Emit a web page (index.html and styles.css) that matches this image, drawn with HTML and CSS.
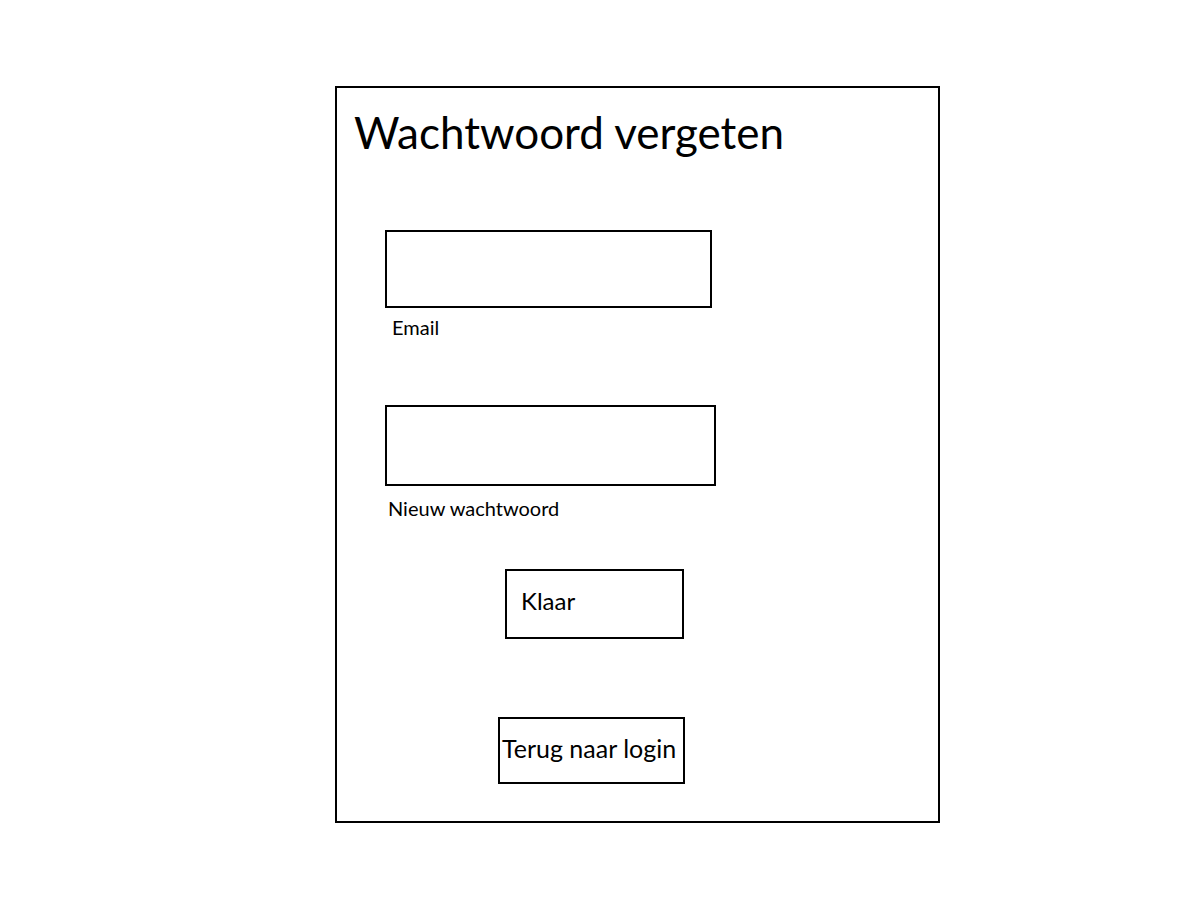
FILE: index.html
```html
<!DOCTYPE html>
<html lang="nl">
<head>
    <meta charset="UTF-8">
    <title>Wachtwoord vergeten</title>
    <meta name="viewport" content="width=device-width, initial-scale=1">
    <link rel="stylesheet" href="styles.css">
</head>
<body>
<div class="card">
    <h1>Wachtwoord vergeten</h1>
    <form id="resetForm" autocomplete="off">
        <div class="field field-email">
            <input type="email" id="email">
            <label for="email">Email</label>
        </div>
        <div class="field field-password">
            <input type="password" id="newPassword">
            <label for="newPassword">Nieuw wachtwoord</label>
        </div>
        <button type="submit" class="btn-done">Klaar</button>
        <button type="button" class="btn-back">Terug naar login</button>
    </form>
</div>
</body>
</html>
```

FILE: styles.css
```css
body {
  background: #fff;
  font-family: Lato, 'Liberation Sans', sans-serif;
  color: #000;
  margin: 0;
}
.card {
  box-sizing: border-box;
  width: 605px;
  height: 737px;
  margin: 86px 0 0 335px;
  border: 2px solid #000;
  padding: 22px 17px 0;
}
h1 {
  margin: 0;
  font-size: 44px;
  font-weight: 400;
  line-height: 1;
}
form {
  display: flex;
  flex-direction: column;
  align-items: flex-start;
}
.field {
  display: flex;
  flex-direction: column;
  align-items: flex-start;
  margin-left: 31px;
}
.field input {
  box-sizing: border-box;
  border: 2px solid #000;
  border-radius: 0;
  background: #fff;
  outline: none;
  margin: 0;
  padding: 0 10px;
  font-size: 20px;
  font-family: inherit;
}
.field label {
  font-size: 20px;
  line-height: 1;
}
.field-email {
  margin-top: 76px;
}
.field-email input {
  width: 327px;
  height: 78px;
}
.field-email label {
  margin: 9px 0 0 7px;
}
.field-password {
  margin-top: 68px;
}
.field-password input {
  width: 331px;
  height: 81px;
}
.field-password label {
  margin: 12px 0 0 3px;
}
button {
  box-sizing: border-box;
  display: flex;
  align-items: center;
  background: #fff;
  border: 2px solid #000;
  border-radius: 0;
  color: #000;
  font-family: inherit;
  line-height: 1;
  cursor: pointer;
}
.btn-done {
  width: 179px;
  height: 70px;
  margin: 51px 0 0 151px;
  padding: 0 0 7px 14px;
  font-size: 24px;
}
.btn-back {
  width: 187px;
  height: 67px;
  margin: 78px 0 0 144px;
  padding: 0 0 5px 2px;
  font-size: 25px;
}
```
